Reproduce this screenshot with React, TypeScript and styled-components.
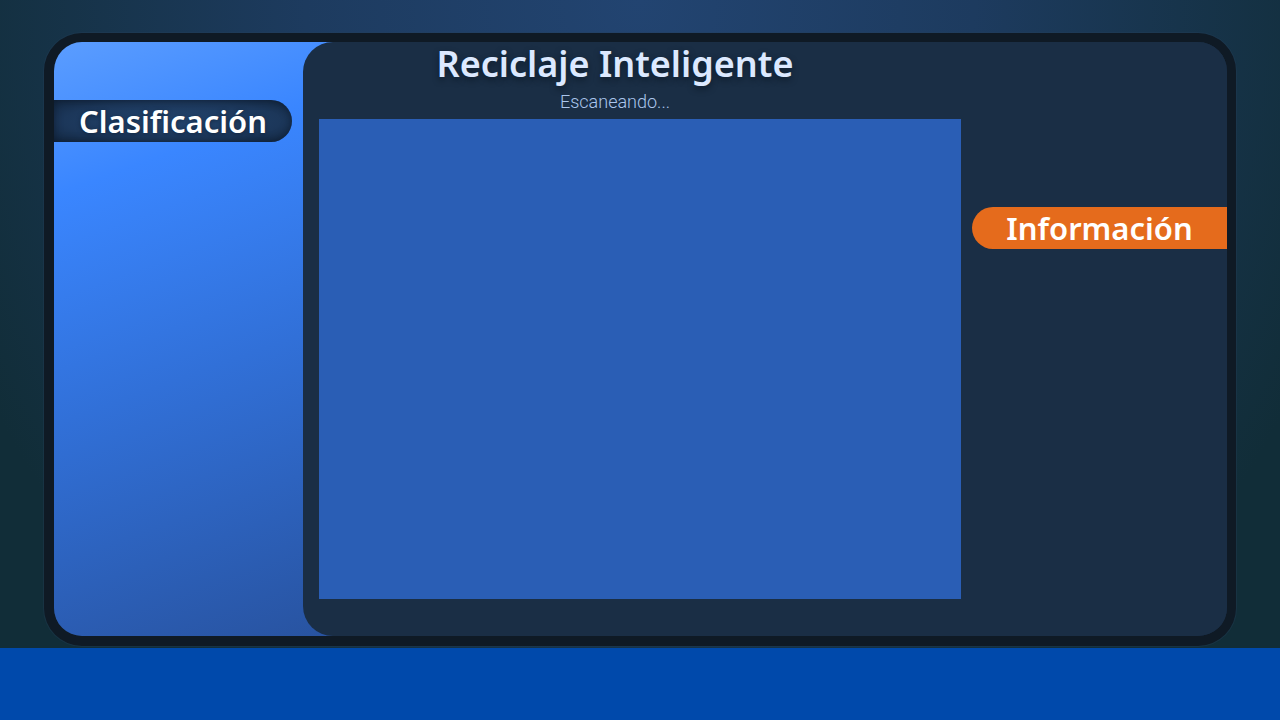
import React from "react";
import styled, { createGlobalStyle } from "styled-components";

const GlobalStyle = createGlobalStyle`
    html, body {
        margin: 0;
        padding: 0;
        height: 100%;
    }
    body {
        font-family: "Noto Sans", "Open Sans", sans-serif;
        background: radial-gradient(
            ellipse 58% 115% at 50% 0%,
            #224471 0%,
            #1d3b5f 45%,
            #112d38 100%
        );
    }
    #root {
        height: 100%;
    }
`;

const App = () => {
    return (
        <>
            <GlobalStyle />
            <Page>
                <Stage>
                    <Device>
                        <Sidebar>
                            <SideTab>Clasificación</SideTab>
                        </Sidebar>
                        <Main>
                            <Center>
                                <Title>Reciclaje Inteligente</Title>
                                <Status>Escaneando...</Status>
                                <Camera />
                            </Center>
                            <Aside>
                                <InfoTab>Información</InfoTab>
                            </Aside>
                        </Main>
                    </Device>
                </Stage>
                <Footer />
            </Page>
        </>
    );
};

export default App;

const Page = styled.div`
    height: 720px;
    display: flex;
    flex-direction: column;
`;

const Stage = styled.div`
    flex: 1;
    padding: 33px 44px 2px;
    display: flex;
    min-height: 0;
`;

const Device = styled.div`
    flex: 1;
    display: flex;
    overflow: hidden;

    border: 10px solid #0f1a25;
    border-top-width: 9px;
    border-right-width: 9px;
    border-radius: 38px;
    background: #1a2e45;
    box-shadow: 0px 0px 0px 1px hsla(212, 40%, 25%, 0.35);
`;

const Sidebar = styled.div`
    width: 280px;
    flex-shrink: 0;
    padding-top: 58px;

    background: linear-gradient(
        160deg,
        #5b9dff 0%,
        #3a86ff 22%,
        #3170d8 55%,
        #2853a0 100%
    );
`;

const SideTab = styled.div`
    width: 238px;
    height: 42px;

    display: flex;
    justify-content: center;
    align-items: center;

    border-radius: 0px 21px 21px 0px;
    background: radial-gradient(
        ellipse at 50% 50%,
        #244670 0%,
        #1c375a 65%,
        #132842 100%
    );
    box-shadow: inset 0px 0px 8px hsla(215, 60%, 8%, 0.6);

    color: #ffffff;
    font-size: 31px;
    font-weight: 600;
    text-shadow: 0px 1px 4px hsla(215, 60%, 10%, 0.6);
`;

const Main = styled.div`
    flex: 1;
    margin-left: -31px;
    position: relative;

    display: flex;

    background: #1a2e45;
    border-radius: 30px 0px 0px 30px;
`;

const Center = styled.div`
    width: 624px;
    flex-shrink: 0;
    padding-top: 2px;

    display: flex;
    flex-direction: column;
`;

const Title = styled.h1`
    margin: 0;
    font-size: 36px;
    line-height: 40px;
    font-weight: 600;
    text-align: center;
    color: #dce9ff;
    text-shadow: 0px 3px 6px hsla(215, 60%, 6%, 0.55);
`;

const Status = styled.div`
    margin-top: 7px;
    font-family: Roboto, "Noto Sans", sans-serif;
    font-size: 18px;
    line-height: 22px;
    font-weight: 300;
    text-align: center;
    color: #abc6ec;
`;

const Camera = styled.div`
    margin: 6px 0px 0px 16px;
    width: 642px;
    height: 480px;
    flex-shrink: 0;
    background: #2a5eb5;
`;

const Aside = styled.div`
    flex: 1;
    padding-top: 165px;

    display: flex;
    flex-direction: column;
    align-items: flex-end;
`;

const InfoTab = styled.div`
    width: 255px;
    height: 42px;

    display: flex;
    justify-content: center;
    align-items: center;

    border-radius: 21px 0px 0px 21px;
    background: #e56b1c;

    color: #ffffff;
    font-size: 31px;
    font-weight: 600;
`;

const Footer = styled.div`
    height: 72px;
    flex-shrink: 0;
    background: #0049ab;
`;
